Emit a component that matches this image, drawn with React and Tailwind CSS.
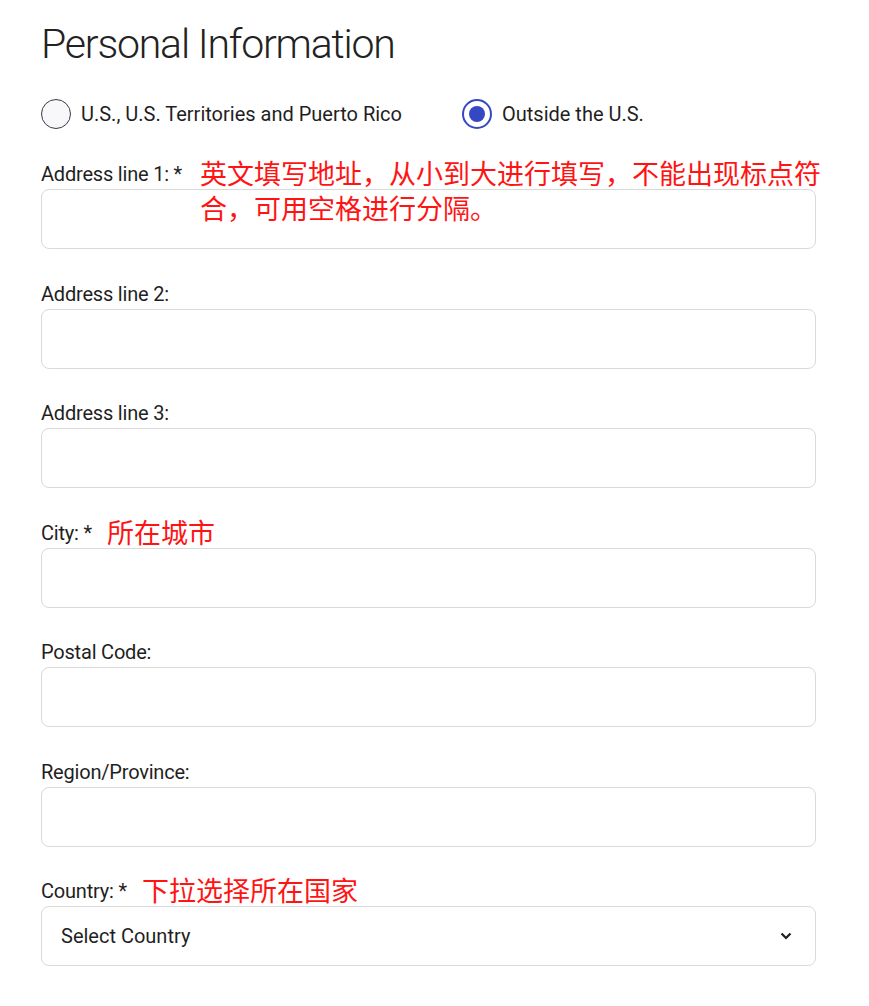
import React, { useState } from 'react';

const fields = [
    { label: 'Address line 1: *', note: ['英文填写地址，从小到大进行填写，不能出现标点符', '合，可用空格进行分隔。'], noteLeft: 'left-[159px]' },
    { label: 'Address line 2:' },
    { label: 'Address line 3:' },
    { label: 'City: *', note: ['所在城市'], noteLeft: 'left-[66px]' },
    { label: 'Postal Code:' },
    { label: 'Region/Province:' },
];

function Radio({ checked, label, onClick }) {
    return (
        <button type="button" onClick={onClick} className="flex items-center gap-[10px] text-left">
            {checked ? (
                <span className="w-[30px] h-[30px] rounded-full border-2 border-[#3548c4] bg-white flex items-center justify-center">
                    <span className="w-[16px] h-[16px] rounded-full bg-[#3548c4]" />
                </span>
            ) : (
                <span className="w-[30px] h-[30px] rounded-full border-[1.5px] border-[#3a3a48] bg-[#f8f8fb]" />
            )}
            <span className="text-[20px] leading-[30px] text-[#1f1f1f]">{label}</span>
        </button>
    );
}

function Note({ lines, left }) {
    return (
        <div className={`absolute top-[-6px] ${left} text-[27px] leading-[35px] text-[#ff1414] whitespace-nowrap font-['Noto_Sans_CJK_SC',sans-serif] pointer-events-none`}>
            {lines.map((l, i) => (
                <div key={i}>{l}</div>
            ))}
        </div>
    );
}

export default function App() {
    const [region, setRegion] = useState('outside');

    return (
        <div className="w-[869px] min-h-[1006px] bg-white px-[41px] pt-[18.5px] font-['Roboto','Noto_Sans_CJK_SC',sans-serif] text-[#1f1f1f]">
            <h1 className="text-[41px] leading-[50px] font-light tracking-[-1.2px] text-[#222]">Personal Information</h1>

            {/* location radios */}
            <div className="mt-[30.5px] flex items-center gap-[60px]">
                <Radio checked={region === 'us'} label="U.S., U.S. Territories and Puerto Rico" onClick={() => setRegion('us')} />
                <Radio checked={region === 'outside'} label="Outside the U.S." onClick={() => setRegion('outside')} />
            </div>

            <div className="mt-[32px] w-[775px] flex flex-col gap-[31.5px]">
                {fields.map((f) => (
                    <div key={f.label} className="relative">
                        <label className="block text-[20px] leading-[27px] tracking-[-0.2px]">{f.label}</label>
                        <input className="mt-px block w-full h-[60px] rounded-[8px] border border-[#d9d9d9] bg-white px-[19px] outline-none" />
                        {f.note && <Note lines={f.note} left={f.noteLeft} />}
                    </div>
                ))}

                <div className="relative">
                    <label className="block text-[20px] leading-[27px] tracking-[-0.2px]">Country: *</label>
                    <div className="mt-px flex items-center justify-between w-full h-[60px] rounded-[8px] border border-[#d9d9d9] bg-white pl-[19px] pr-[23px]">
                        <span className="text-[20px] text-[#1f1f1f]">Select Country</span>
                        <svg width="12" height="8" viewBox="0 0 12 8" fill="none">
                            <path d="M1.5 1.5 6 6l4.5-4.5" stroke="#1f1f1f" strokeWidth="2.2" />
                        </svg>
                    </div>
                    <Note lines={['下拉选择所在国家']} left="left-[101px]" />
                </div>
            </div>
        </div>
    );
}
